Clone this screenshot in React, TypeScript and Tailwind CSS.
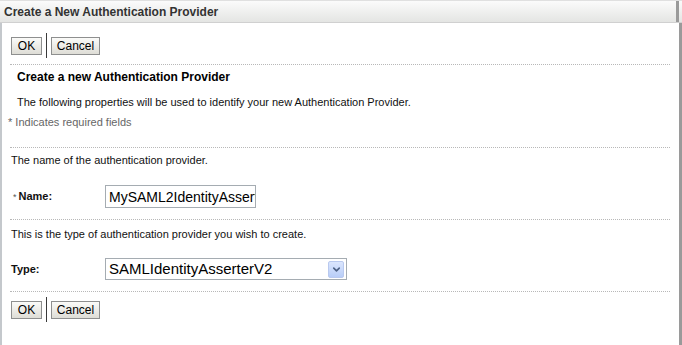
import { ChevronDown } from "lucide-react";

function ButtonBar() {
  return (
    <div className="flex h-[25px] items-center pl-[9px]">
      <button
        type="button"
        className="h-[18px] w-[31px] border border-[#8e8f8f] bg-gradient-to-b from-[#fbfbf9] to-[#deddd6] text-[12px] leading-none text-black"
      >
        OK
      </button>
      <span className="mx-[4px] h-[25px] w-px bg-[#3a3a3a]" />
      <button
        type="button"
        className="h-[18px] w-[49px] border border-[#8e8f8f] bg-gradient-to-b from-[#fbfbf9] to-[#deddd6] text-[12px] leading-none text-black"
      >
        Cancel
      </button>
    </div>
  );
}

function Dots() {
  return <div className="ml-[8px] mr-[9px] border-t border-dotted border-[#b8b8b8]" />;
}

export default function App() {
  return (
    <div className="flex h-[345px] w-[682px] flex-col bg-white font-['Liberation_Sans',Arial,sans-serif] text-[11px] leading-[14px] text-[#111]">
      <div className="flex h-[23px] shrink-0 items-center border-t border-b border-t-[#e0e0e0] border-b-[#d0d0d0] bg-gradient-to-b from-[#fbfbfb] to-[#e4e5e3] pr-[3px]">
        <h1 className="pl-[4px] text-[12px] font-bold text-[#333]">Create a New Authentication Provider</h1>
        <div className="ml-auto h-full w-[3px] bg-[#9a9a9a]" />
      </div>
      <div className="flex flex-1">
        <div className="w-[2px] bg-[#c4c8cc]" />
        <div className="flex-1 pt-[10px]">
          <ButtonBar />
          <div className="mt-[6px]">
            <Dots />
          </div>
          <div className="pl-[15px] pt-[5px]">
            <h2 className="text-[12px] font-bold text-black">Create a new Authentication Provider</h2>
            <p className="mt-[11px]">The following properties will be used to identify your new Authentication Provider.</p>
          </div>
          <p className="mt-[6px] pl-[6px] text-[#666]">* Indicates required fields</p>
          <div className="mt-[18px]">
            <Dots />
          </div>
          <p className="mt-[5px] pl-[9px]">The name of the authentication provider.</p>
          <div className="mt-[18px] flex items-center pl-[11px]">
            <span className="w-[92px] font-bold">
              <span className="mr-[2px] text-[9px] font-normal text-[#555]">*</span>Name:
            </span>
            <input
              readOnly
              value="MySAML2IdentityAssert"
              className="h-[23px] w-[151px] border border-[#a5acb2] pl-[3px] pr-0 font-['Liberation_Sans',Arial,sans-serif] text-[14px] text-black outline-none"
            />
          </div>
          <div className="mt-[11px]">
            <Dots />
          </div>
          <p className="mt-[7px] pl-[9px]">This is the type of authentication provider you wish to create.</p>
          <div className="mt-[17px] flex items-center pl-[9px]">
            <span className="w-[94px] font-bold">Type:</span>
            <div className="flex h-[22px] w-[242px] items-center border border-[#a5acb2] pl-[3px] pr-[2px]">
              <span className="flex-1 text-[15px] text-black">SAMLIdentityAsserterV2</span>
              <span className="flex h-[17px] w-[16px] items-center justify-center rounded-[2px] border border-[#b9c9ef] bg-gradient-to-b from-[#dbe6fd] to-[#b8cdf8]">
                <ChevronDown size={11} strokeWidth={3.5} className="text-[#4d6185]" />
              </span>
            </div>
          </div>
          <div className="mt-[11px]">
            <Dots />
          </div>
          <div className="mt-[5px]">
            <ButtonBar />
          </div>
        </div>
        <div className="w-[3px] bg-[#9a9a9a]" />
      </div>
    </div>
  );
}
